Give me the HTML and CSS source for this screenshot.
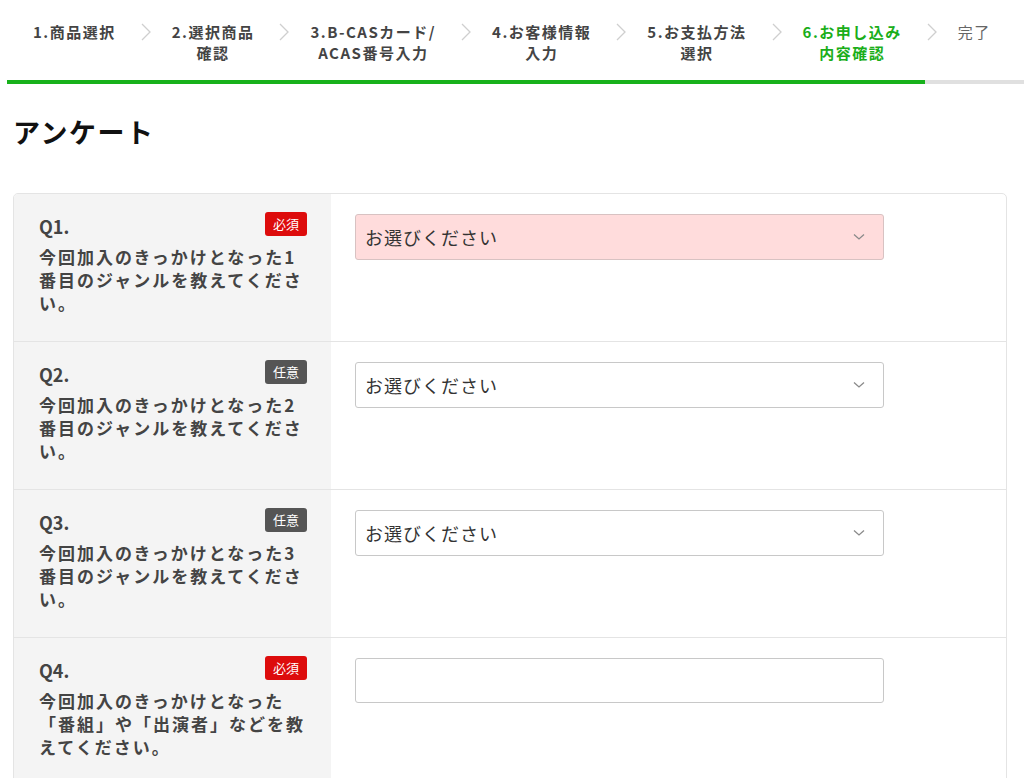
FILE: index.html
```html
<!DOCTYPE html>
<html lang="ja">
<head>
<meta charset="utf-8">
<title>アンケート</title>
<link rel="stylesheet" href="styles.css">
</head>
<body>
<nav class="steps">
  <div class="step">1.商品選択</div>
  <span class="chev"><svg width="12" height="20" viewBox="0 0 12 20"><path d="M2 2 L10 10 L2 18" fill="none" stroke="#cfcfcf" stroke-width="1.3"/></svg></span>
  <div class="step"><div>2.選択商品</div><div>確認</div></div>
  <span class="chev"><svg width="12" height="20" viewBox="0 0 12 20"><path d="M2 2 L10 10 L2 18" fill="none" stroke="#cfcfcf" stroke-width="1.3"/></svg></span>
  <div class="step"><div>3.B-CASカード/</div><div>ACAS番号入力</div></div>
  <span class="chev"><svg width="12" height="20" viewBox="0 0 12 20"><path d="M2 2 L10 10 L2 18" fill="none" stroke="#cfcfcf" stroke-width="1.3"/></svg></span>
  <div class="step"><div>4.お客様情報</div><div>入力</div></div>
  <span class="chev"><svg width="12" height="20" viewBox="0 0 12 20"><path d="M2 2 L10 10 L2 18" fill="none" stroke="#cfcfcf" stroke-width="1.3"/></svg></span>
  <div class="step"><div>5.お支払方法</div><div>選択</div></div>
  <span class="chev"><svg width="12" height="20" viewBox="0 0 12 20"><path d="M2 2 L10 10 L2 18" fill="none" stroke="#cfcfcf" stroke-width="1.3"/></svg></span>
  <div class="step active"><div>6.お申し込み</div><div>内容確認</div></div>
  <span class="chev"><svg width="12" height="20" viewBox="0 0 12 20"><path d="M2 2 L10 10 L2 18" fill="none" stroke="#cfcfcf" stroke-width="1.3"/></svg></span>
  <div class="step done">完了</div>
</nav>
<div class="progress"><div class="progress-fill" style="width: 918px"></div></div>

<main class="main">
  <h1 class="title">アンケート</h1>
  <div class="card">
    <div class="row">
      <div class="qcell">
        <div class="qhead"><span class="qnum">Q1.</span><span class="badge req">必須</span></div>
        <div class="qtext">今回加入のきっかけとなった1番目のジャンルを教えてください。</div>
      </div>
      <div class="acell">
        <div class="select error"><span>お選びください</span><svg class="arrow" width="12" height="8" viewBox="0 0 12 8"><path d="M1 1.5 L6 6 L11 1.5" fill="none" stroke="#8a8a8a" stroke-width="1.3"/></svg></div>
      </div>
    </div>
    <div class="row">
      <div class="qcell">
        <div class="qhead"><span class="qnum">Q2.</span><span class="badge opt">任意</span></div>
        <div class="qtext">今回加入のきっかけとなった2番目のジャンルを教えてください。</div>
      </div>
      <div class="acell">
        <div class="select"><span>お選びください</span><svg class="arrow" width="12" height="8" viewBox="0 0 12 8"><path d="M1 1.5 L6 6 L11 1.5" fill="none" stroke="#8a8a8a" stroke-width="1.3"/></svg></div>
      </div>
    </div>
    <div class="row">
      <div class="qcell">
        <div class="qhead"><span class="qnum">Q3.</span><span class="badge opt">任意</span></div>
        <div class="qtext">今回加入のきっかけとなった3番目のジャンルを教えてください。</div>
      </div>
      <div class="acell">
        <div class="select"><span>お選びください</span><svg class="arrow" width="12" height="8" viewBox="0 0 12 8"><path d="M1 1.5 L6 6 L11 1.5" fill="none" stroke="#8a8a8a" stroke-width="1.3"/></svg></div>
      </div>
    </div>
    <div class="row">
      <div class="qcell">
        <div class="qhead"><span class="qnum">Q4.</span><span class="badge req">必須</span></div>
        <div class="qtext">今回加入のきっかけとなった<br>「番組」や「出演者」などを教えてください。</div>
      </div>
      <div class="acell">
        <div class="textbox"></div>
      </div>
    </div>
  </div>
</main>
</body>
</html>
```

FILE: styles.css
```css
* { box-sizing: border-box; }
body {
  margin: 0;
  background: #fff;
  font-family: "Noto Sans CJK JP", "Noto Sans", sans-serif;
  color: #333;
}
.steps {
  display: flex;
  align-items: flex-start;
  padding: 21px 0 0 33px;
  height: 80px;
}
.step {
  font-size: 15px;
  font-weight: bold;
  line-height: 21px;
  letter-spacing: 1.5px;
  color: #444;
  text-align: center;
  white-space: nowrap;
}
.step.active { color: #1aae1a; }
.step.done { font-weight: normal; color: #666; }
.chev {
  display: flex;
  margin: 0 20px 0 24px;
  padding-top: 1px;
}
.progress {
  margin-left: 7px;
  height: 4px;
  background: #e0e0e0;
}
.progress-fill {
  height: 4px;
  background: #17b11b;
}
.main {
  padding: 0 17px 0 13px;
}
.title {
  margin: 32px 0 45px;
  font-size: 27px;
  line-height: 32px;
  letter-spacing: 1.5px;
  font-weight: bold;
  color: #111;
}
.card {
  border: 1px solid #e4e4e4;
  border-radius: 5px;
  overflow: hidden;
}
.row {
  display: flex;
  border-top: 1px solid #e4e4e4;
  min-height: 148px;
}
.row:first-child { border-top: none; min-height: 147px; }
.qcell {
  width: 317px;
  flex: none;
  background: #f4f4f4;
  padding: 18px 24px 20px 25px;
}
.qhead {
  display: flex;
  justify-content: space-between;
  align-items: center;
  height: 24px;
  margin-bottom: 9px;
}
.qnum {
  font-size: 18px;
  font-weight: bold;
  color: #444;
  padding-top: 4px;
}
.badge {
  font-size: 13px;
  color: #fff;
  width: 42px;
  height: 24px;
  line-height: 24px;
  text-align: center;
  border-radius: 3px;
}
.badge.req { background: #dd0c0c; }
.badge.opt { background: #555; }
.qtext {
  font-size: 17px;
  line-height: 23px;
  font-weight: bold;
  letter-spacing: 2px;
  color: #444;
}
.acell {
  flex: 1;
  padding: 20px 24px;
}
.select {
  width: 529px;
  height: 46px;
  border: 1px solid #c8c8c8;
  border-radius: 3px;
  background: #fff;
  display: flex;
  align-items: center;
  justify-content: space-between;
  padding: 0 18px 0 9px;
  font-size: 18px;
  letter-spacing: 1px;
  color: #333;
}
.select.error {
  background: #ffdcdc;
  border-color: #d8c2c2;
}
.textbox {
  width: 529px;
  height: 45px;
  border: 1px solid #c8c8c8;
  border-radius: 3px;
  background: #fff;
}
```
